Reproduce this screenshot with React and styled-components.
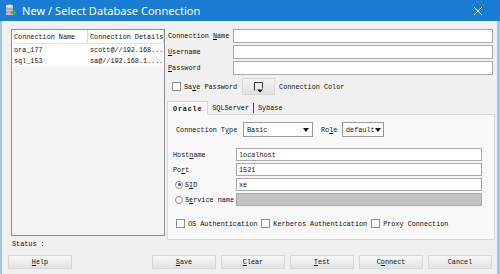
import React from "react";
import styled, { createGlobalStyle } from "styled-components";

const Global = createGlobalStyle`
  html, body { margin: 0; padding: 0; overflow: hidden; }
  body { font-family: "Liberation Mono", "DejaVu Sans Mono", monospace; }
`;

const Window = styled.div`
  width: 500px;
  height: 274px;
  display: flex;
  flex-direction: column;
  background: #f0f0f0;
  font-family: "Liberation Mono", monospace;
  font-size: 6.8px;
  color: #111;
`;

const TitleBar = styled.div`
  height: 21px;
  flex: none;
  display: flex;
  align-items: center;
  background: #1a7cd3;
  color: #fff;
  padding: 0 0 0 5px;
  font-family: "Noto Sans", "Open Sans", sans-serif;
  font-size: 11px;
  gap: 6px;
`;

const TitleText = styled.span`
  flex: 1;
  letter-spacing: 0.05px;
`;

const CloseBtn = styled.div`
  width: 44px;
  height: 21px;
  display: flex;
  align-items: center;
  justify-content: center;
`;

const Body = styled.div`
  flex: 1;
  display: flex;
  flex-direction: column;
  border-left: 2px solid #9cc8ee;
  border-right: 3px solid #9cc8ee;
  padding: 8px 2px 0 9px;
`;

const MainRow = styled.div`
  display: flex;
  gap: 2px;
  height: 210px;
  align-items: flex-start;
`;

const Table = styled.div`
  width: 152px;
  height: 205px;
  border: 1px solid #8c9096;
  background: #f3f3f3;
  display: grid;
  grid-template-columns: 76px 1fr;
  grid-auto-rows: 11px;
  grid-template-rows: 14px;
  align-content: start;
`;

const Cell = styled.div`
  background: #fff;
  padding-left: 2px;
  display: flex;
  align-items: center;
  white-space: nowrap;
  overflow: hidden;
  border-right: ${(p) => (p.$head ? "1px solid #dcdcdc" : "none")};
  border-bottom: ${(p) => (p.$head ? "1px solid #e4e4e4" : "none")};
`;

const Form = styled.div`
  flex: 1;
  display: flex;
  flex-direction: column;
`;

const FieldRow = styled.div`
  display: flex;
  align-items: center;
  height: 14px;
  margin-bottom: 2px;
  margin-right: 2px;
`;

const Label = styled.div`
  width: ${(p) => p.$w}px;
  flex: none;
  padding-left: ${(p) => p.$pl || 1}px;
  box-sizing: border-box;
  white-space: nowrap;
`;

const Input = styled.div`
  flex: 1;
  height: 100%;
  box-sizing: border-box;
  border: 1px solid #a9a9a9;
  background: ${(p) => (p.$disabled ? "#c4c4c4" : "#fff")};
  display: flex;
  align-items: center;
  padding-left: 2px;
`;

const U = styled.span`
  text-decoration: underline;
`;

const SaveRow = styled.div`
  display: flex;
  align-items: center;
  height: 17px;
  margin-top: 1px;
  padding-left: 5px;
`;

const Check = styled.span`
  width: 9px;
  height: 9px;
  flex: none;
  box-sizing: border-box;
  border: 1px solid #8f8f8f;
  background: #fff;
  margin-right: 3px;
`;

const ColorButton = styled.div`
  width: 33px;
  height: 17px;
  box-sizing: border-box;
  margin: 0 4px 0 5px;
  background: linear-gradient(#f4f4f4, #e2e2e2);
  border: 1px solid #d6d6d6;
  display: flex;
  align-items: center;
  justify-content: center;
`;

const Tabs = styled.div`
  display: flex;
  align-items: flex-end;
  height: 14px;
  margin-top: 5px;
`;

const Tab = styled.div`
  height: ${(p) => (p.$active ? 14 : 12)}px;
  box-sizing: border-box;
  padding: 0 ${(p) => (p.$active ? 5 : 4)}px;
  display: flex;
  align-items: center;
  font-weight: ${(p) => (p.$active ? 700 : 400)};
  letter-spacing: ${(p) => (p.$active ? "0.8px" : "0")};
  background: ${(p) => (p.$active ? "#f8f8f8" : "transparent")};
  border: ${(p) => (p.$active ? "1px solid #d9d9d9" : "none")};
  border-bottom: none;
  margin-bottom: ${(p) => (p.$active ? -1 : 0)}px;
  position: relative;
  z-index: 1;
`;

const TabSep = styled.span`
  width: 1px;
  height: 10px;
  background: #444;
  margin-bottom: 1px;
`;

const Panel = styled.div`
  height: 126px;
  box-sizing: border-box;
  border: 1px solid #d9d9d9;
  background: #f8f8f8;
  padding: 7px 12px 0 5px;
  display: flex;
  flex-direction: column;
`;

const TypeRow = styled.div`
  display: flex;
  align-items: center;
  height: 15px;
  padding-left: 2px;
`;

const Select = styled.div`
  width: ${(p) => p.$w}px;
  height: 15px;
  box-sizing: border-box;
  border: 1px solid #9a9a9a;
  background: #fff;
  display: flex;
  align-items: center;
  justify-content: space-between;
  padding: 0 3px;
  margin-right: ${(p) => p.$mr || 0}px;
`;

const Caret = styled.span`
  width: 0;
  height: 0;
  border-left: 3px solid transparent;
  border-right: 3px solid transparent;
  border-top: 4px solid #111;
`;

const Grid = styled.div`
  display: grid;
  grid-template-columns: 63px 1fr;
  grid-auto-rows: 13px;
  row-gap: 2px;
  margin-top: 11px;
`;

const GridLabel = styled.div`
  display: flex;
  align-items: center;
  white-space: nowrap;
`;

const Radio = styled.span`
  width: 8px;
  height: 8px;
  box-sizing: border-box;
  border-radius: 50%;
  border: 1px solid #8a8a8a;
  background: #fff;
  margin: 0 2px 0 2px;
  display: flex;
  align-items: center;
  justify-content: center;
  &::after {
    content: "";
    width: 3px;
    height: 3px;
    border-radius: 50%;
    background: ${(p) => (p.$on ? "#2a5aa8" : "transparent")};
  }
`;

const AuthRow = styled.div`
  display: flex;
  align-items: center;
  margin-top: 13px;
  padding-left: 3px;
`;

const AuthItem = styled.div`
  display: flex;
  align-items: center;
  margin-right: 4px;
`;

const Status = styled.div`
  height: 9px;
  line-height: 9px;
  margin-top: 1px;
  padding-left: 1px;
`;

const ButtonRow = styled.div`
  display: flex;
  gap: 5px;
  margin: 6px 3px 0 -3px;
`;

const Button = styled.div`
  width: 64px;
  height: 14px;
  box-sizing: border-box;
  display: flex;
  align-items: center;
  justify-content: center;
  background: linear-gradient(#f7f7f7, #e3e3e3);
  border: 1px solid #d7d7d7;
  margin-right: ${(p) => (p.$spacer ? "auto" : "0")};
`;

function DbIcon() {
  return (
    <svg width="11" height="13" viewBox="0 0 11 13">
      <rect x="1" y="2" width="7" height="9" fill="#b8c2cc" />
      <ellipse cx="4.5" cy="2" rx="3.5" ry="1.5" fill="#dfe5ea" />
      <path d="M1 5h7M1 8h7" stroke="#8a96a2" strokeWidth="0.8" />
      <path d="M6 7h3v-2l2 3.5-2 3.5v-2H6z" fill="#36b34a" />
    </svg>
  );
}

function CloseIcon() {
  return (
    <svg width="10" height="10" viewBox="0 0 10 10">
      <path d="M1 1l8 8M9 1l-8 8" stroke="#fff" strokeWidth="1" />
    </svg>
  );
}

function ColorIcon() {
  return (
    <svg width="12" height="12" viewBox="0 0 12 12">
      <path d="M1.5 9.5V1.5h8v6" fill="none" stroke="#333" strokeWidth="1" />
      <path d="M4 8.5h6l-3 3z" fill="#111" />
    </svg>
  );
}

const connections = [
  { name: "ora_177", details: "scott@//192.168..." },
  { name: "sql_153", details: "sa@//192.168.1...." },
];

export default function App() {
  return (
    <>
      <Global />
      <Window>
        <TitleBar>
          <DbIcon />
          <TitleText>New / Select Database Connection</TitleText>
          <CloseBtn>
            <CloseIcon />
          </CloseBtn>
        </TitleBar>
        <Body>
          <MainRow>
            <Table>
              <Cell $head>Connection Name</Cell>
              <Cell $head>Connection Details</Cell>
              {connections.map((c) => (
                <React.Fragment key={c.name}>
                  <Cell>{c.name}</Cell>
                  <Cell>{c.details}</Cell>
                </React.Fragment>
              ))}
            </Table>
            <Form>
              <FieldRow>
                <Label $w={66}>Connection <U>N</U>ame</Label>
                <Input />
              </FieldRow>
              <FieldRow>
                <Label $w={66}><U>U</U>sername</Label>
                <Input />
              </FieldRow>
              <FieldRow>
                <Label $w={66}><U>P</U>assword</Label>
                <Input />
              </FieldRow>
              <SaveRow>
                <Check />
                <span>Sa<U>v</U>e Password</span>
                <ColorButton>
                  <ColorIcon />
                </ColorButton>
                <span>Connection Color</span>
              </SaveRow>
              <Tabs>
                <Tab $active>Oracle</Tab>
                <Tab>SQLServer</Tab>
                <TabSep />
                <Tab>Sybase</Tab>
              </Tabs>
              <Panel>
                <TypeRow>
                  <Label $w={68} $pl={1}>Connection T<U>y</U>pe</Label>
                  <Select $w={70} $mr={7}>
                    <span>Basic</span>
                    <Caret />
                  </Select>
                  <Label $w={22} $pl={1}>Ro<U>l</U>e</Label>
                  <Select $w={42}>
                    <span>default</span>
                    <Caret />
                  </Select>
                </TypeRow>
                <Grid>
                  <GridLabel>Host<U>n</U>ame</GridLabel>
                  <Input>localhost</Input>
                  <GridLabel>Po<U>r</U>t</GridLabel>
                  <Input>1521</Input>
                  <GridLabel>
                    <Radio $on />S<U>I</U>D
                  </GridLabel>
                  <Input>xe</Input>
                  <GridLabel>
                    <Radio />S<U>e</U>rvice name
                  </GridLabel>
                  <Input $disabled />
                </Grid>
                <AuthRow>
                  <AuthItem><Check />OS Authentication</AuthItem>
                  <AuthItem><Check />Kerberos Authentication</AuthItem>
                  <AuthItem><Check />Proxy Connection</AuthItem>
                </AuthRow>
              </Panel>
            </Form>
          </MainRow>
          <Status>Status :</Status>
          <ButtonRow>
            <Button $spacer><U>H</U>elp</Button>
            <Button><U>S</U>ave</Button>
            <Button><U>C</U>lear</Button>
            <Button><U>T</U>est</Button>
            <Button>C<U>o</U>nnect</Button>
            <Button>Cancel</Button>
          </ButtonRow>
        </Body>
      </Window>
    </>
  );
}
